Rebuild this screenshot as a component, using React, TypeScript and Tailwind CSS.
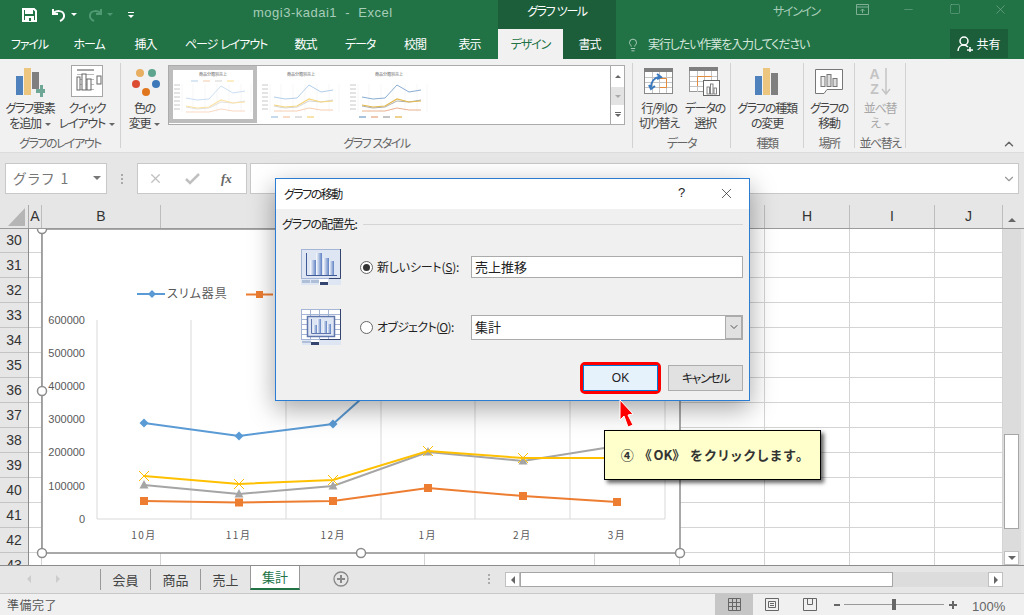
import React from 'react';
import { ChevronDown, ChevronUp, Lightbulb, X, Minus, Square } from 'lucide-react';

const colWidths = [13, 119, 264, 170, 85, 85, 85, 85, 68];
const colNames = ['A', 'B', '', '', '', '', 'H', 'I', 'J'];
const rowNums = [30, 31, 32, 33, 34, 35, 36, 37, 38, 39, 40, 41, 42, 43];

const blue = [[144, 423], [239, 436], [333, 424], [427, 340], [522, 360], [617, 352]];
const orange = [[144, 501], [239, 502.5], [333, 501], [428, 488], [523, 496], [617, 502]];
const gray = [[144, 485], [239, 494], [333, 486], [428, 452], [523, 461], [617, 446]];
const yellow = [[144, 476], [239, 484], [333, 480], [428, 451], [523, 458], [617, 458]];

const pts = (a: number[][]) => a.map((p) => p.join(',')).join(' ');

function Chart() {
  return (
    <svg width="660" height="336" viewBox="30 229 660 336" className="absolute left-[30px] top-0">
      <rect x="42" y="229" width="638" height="324" fill="#fff" stroke="#8c8c8c" strokeWidth="1.5" />
      {[97, 191, 286, 381, 475, 570, 665].map((x) => (
        <line key={x} x1={x} x2={x} y1="320" y2="519" stroke="#d9d9d9" />
      ))}
      <line x1="97" x2="665" y1="519" y2="519" stroke="#d9d9d9" />
      {[['600000', 324], ['500000', 357], ['400000', 390], ['300000', 423], ['200000', 456], ['100000', 490], ['0', 523]].map(([t, y]) => (
        <text key={t} x="85" y={y} textAnchor="end" fontSize="11" fill="#595959" fontFamily="Liberation Sans">{t}</text>
      ))}
      {['10月', '11月', '12月', '1月', '2月', '3月'].map((t, i) => (
        <text key={t} x={144 + i * 94.6} y="539" textAnchor="middle" fontSize="10" letterSpacing="1.5" fill="#595959">{t}</text>
      ))}
      <line x1="137" x2="165" y1="294" y2="294" stroke="#5b9bd5" strokeWidth="2" />
      <polygon points="152,290 156,294 152,298 148,294" fill="#5b9bd5" />
      <text x="167" y="298" fontSize="12" letterSpacing="1" fill="#595959">スリム器具</text>
      <line x1="246" x2="273" y1="294.5" y2="294.5" stroke="#ed7d31" strokeWidth="2" />
      <rect x="256" y="291" width="7" height="7" fill="#ed7d31" />

      <polyline points={pts(blue)} fill="none" stroke="#5b9bd5" strokeWidth="2" />
      {blue.map(([x, y]) => <polygon key={x} points={`${x},${y - 4.5} ${x + 4.5},${y} ${x},${y + 4.5} ${x - 4.5},${y}`} fill="#5b9bd5" />)}
      <polyline points={pts(gray)} fill="none" stroke="#a5a5a5" strokeWidth="2" />
      {gray.map(([x, y]) => <polygon key={x} points={`${x},${y - 5} ${x + 4.5},${y + 3.5} ${x - 4.5},${y + 3.5}`} fill="#a5a5a5" />)}
      <polyline points={pts(yellow)} fill="none" stroke="#ffc000" strokeWidth="2" />
      {yellow.map(([x, y]) => <path key={x} d={`M${x - 5} ${y - 5}L${x + 5} ${y + 5}M${x + 5} ${y - 5}L${x - 5} ${y + 5}`} stroke="#ffc000" strokeWidth="1" />)}
      <polyline points={pts(orange)} fill="none" stroke="#ed7d31" strokeWidth="2" />
      {orange.map(([x, y]) => <rect key={x} x={x - 4} y={y - 4} width="8" height="8" fill="#ed7d31" />)}

      {[[42, 229], [42, 391], [42, 553], [361, 553], [680, 553]].map(([x, y]) => (
        <circle key={`${x}-${y}`} cx={x} cy={y} r="4.5" fill="#fff" stroke="#8c8c8c" strokeWidth="1.5" />
      ))}
    </svg>
  );
}

function Thumb({ selected, colors }: { selected?: boolean; colors: string[] }) {
  const xs = [13, 24, 36, 48, 60, 72];
  const top = selected ? 0 : -1;
  const mk = (ys: number[]) => xs.map((x, i) => [x, ys[i] + top]);
  const chartLeft = 9;
  const legendY = selected ? 11 : 47;
  return (
    <div className={selected ? 'w-[88px] h-[57px] border-[4px] border-[#bdbdbd] flex items-center justify-center' : 'w-[88px] h-[57px] flex items-center justify-center'}>
      <svg width="80" height="49" viewBox="0 0 80 49">
        <rect width="80" height="49" fill="#fff" />
        <text x="40" y="6" fontSize="4" textAnchor="middle" fill="#666">商品分類別売上</text>
        {[chartLeft, 20, 32, 44, 56, 68, 78].map((x) => <line key={x} x1={x} x2={x} y1="14" y2="42" stroke="#efefef" strokeWidth="0.5" />)}
        {[15, 19, 23, 27, 31, 35, 39].map((y) => <line key={y} x1="1" x2="7" y1={y} y2={y} stroke="#c8c8c8" strokeWidth="1" />)}
        {[10, 22, 34, 46].map((x, i) => (
          <line key={x} x1={x + (selected ? 8 : 0)} x2={x + (selected ? 15 : 7)} y1={legendY} y2={legendY} stroke={colors[i]} strokeWidth="1.300" />
        ))}
        <polyline points={pts(mk([28, 30, 29, 16, 23, 21]))} fill="none" stroke={colors[0]} strokeWidth="0.9" />
        <polyline points={pts(mk([37, 39, 38, 32, 33, 31]))} fill="none" stroke={colors[2]} strokeWidth="0.9" />
        <polyline points={pts(mk([36, 38, 37, 30, 33, 32]))} fill="none" stroke={colors[3]} strokeWidth="1.200" />
        <polyline points={pts(mk([42, 42, 42, 39, 41, 41]))} fill="none" stroke={colors[1]} strokeWidth="0.9" />
      </svg>
    </div>
  );
}

function Tri({ light }: { light?: boolean }) {
  return <span className={light ? 'inline-block ml-[4px] mb-[2px] w-0 h-0 border-x-[3px] border-x-transparent border-t-[3px] border-t-[#bbb]' : 'inline-block ml-[4px] mb-[2px] w-0 h-0 border-x-[3px] border-x-transparent border-t-[3px] border-t-[#666]'} />;
}

function BigBtn({ w, icon, lines, faded }: { w: string; icon: React.ReactNode; lines: React.ReactNode[]; faded?: boolean }) {
  return (
    <div className={`${w} flex flex-col items-center`}>
      <div className="h-[37px] flex items-center justify-center">{icon}</div>
      <div className={`text-[12px] leading-[15px] tracking-[-1.200px] text-center whitespace-nowrap ${faded ? 'text-[#a6a6a6]' : 'text-[#444]'}`}>
        {lines.map((l, i) => <div key={i}>{l}</div>)}
      </div>
    </div>
  );
}

function Group({ w, label, children }: { w: string; label: string; children: React.ReactNode }) {
  return (
    <div className={`${w} h-[85px] mt-[4px] border-r border-[#d2d2d2] flex flex-col`}>
      <div className="flex flex-1">{children}</div>
      <div className="text-center text-[12px] leading-[15px] tracking-[-1.500px] mb-[-2px] text-[#666] whitespace-pre">{label}</div>
    </div>
  );
}

function DialogChartIcon({ grid }: { grid?: boolean }) {
  const id = grid ? 'barB' : 'barA';
  return (
    <svg width="41" height="37" viewBox="0 0 41 37">
      <defs>
        <linearGradient id={id} x1="0" x2="1" y1="0" y2="0">
          <stop offset="0" stopColor="#ffffff" />
          <stop offset="1" stopColor="#5f82c4" />
        </linearGradient>
      </defs>
      {grid ? (
        <g>
          <rect x="0.5" y="0.5" width="39" height="30" fill="#fff" stroke="#a5b5d5" />
          {[9, 18, 27].map((x) => <line key={x} x1={x + 0.5} x2={x + 0.5} y1="0" y2="31" stroke="#a5b5d5" />)}
          {[5, 10, 15, 20, 25].map((y) => <line key={y} x1="0" x2="40" y1={y + 0.5} y2={y + 0.5} stroke="#a5b5d5" />)}
          <path d="M39.500 0V30.500H19" fill="none" stroke="#34466f" />
          <rect x="6.500" y="7.500" width="27" height="20" fill="#dfe6f3" stroke="#5f76ad" strokeWidth="1.500" />
          <path d="M10.500 10V24.500H30" fill="none" stroke="#5f76ad" />
          <rect x="12" y="16" width="4" height="8" fill={`url(#${id})`} />
          <rect x="16" y="10" width="4" height="14" fill={`url(#${id})`} />
          <rect x="22" y="12" width="4" height="12" fill={`url(#${id})`} />
          <rect x="26" y="15" width="4" height="9" fill={`url(#${id})`} />
          <rect x="1" y="31" width="39" height="5" fill="#dfe6f3" />
          <rect x="1" y="32" width="9" height="2" fill="#b0bfd8" />
          <rect x="10" y="31" width="8" height="2" fill="#fff" />
          <rect x="10" y="33" width="8" height="3" fill="#34466f" />
        </g>
      ) : (
        <g>
          <rect x="0" y="29" width="40" height="7" fill="#dfe6f3" />
          <rect x="1" y="31" width="8" height="3" fill="#b0bfd8" />
          <rect x="10" y="31" width="8" height="3" fill="#b0bfd8" />
          <rect x="0.500" y="0.500" width="39" height="29" fill="#dfe6f3" stroke="#a5b5d5" />
          <path d="M39.500 0V29.500H28" fill="none" stroke="#34466f" />
          <path d="M5.500 4V26.500H36" fill="none" stroke="#3f5a96" />
          <rect x="9" y="11" width="6" height="15" fill={`url(#${id})`} />
          <rect x="15" y="4" width="6" height="22" fill={`url(#${id})`} />
          <rect x="22" y="9" width="6" height="17" fill={`url(#${id})`} />
          <rect x="28" y="12" width="5" height="14" fill={`url(#${id})`} />
          <rect x="18" y="30" width="9" height="6" fill="#fff" />
          <rect x="19" y="33" width="8" height="3" fill="#34466f" />
        </g>
      )}
    </svg>
  );
}

export default function App() {
  return (
    <div className="relative w-[1024px] h-[615px] overflow-hidden bg-[#e6e6e6] font-['Noto_Sans_CJK_JP',sans-serif] [font-feature-settings:'palt'] select-none">
      {/* タイトルバー */}
      <div className="h-[29px] bg-[#217346] flex items-center relative">
        <svg width="15" height="14" viewBox="0 0 15 14" className="ml-[22px]">
          <path d="M1 1H12L14 3V13H1Z" fill="none" stroke="#fff" strokeWidth="2" />
          <rect x="3" y="1" width="8" height="5" fill="#fff" />
          <rect x="3" y="8" width="9" height="5" fill="#fff" />
          <rect x="7" y="10" width="2" height="3" fill="#217346" />
        </svg>
        <svg width="18" height="16" viewBox="0 0 18 16" className="ml-[13px]">
          <path d="M3 2V7H8M3 7C6 3 13 3 14 8C14.500 11 12 13 10 14" fill="none" stroke="#fff" strokeWidth="2" />
        </svg>
        <span className="ml-[3px] w-0 h-0 border-x-[3px] border-x-transparent border-t-[3px] border-t-white" />
        <svg width="16" height="16" viewBox="0 0 16 16" className="ml-[10px]">
          <path d="M14 2V7H9M14 7C11 3 4 3 3 8C2.500 11 5 13 7 14" fill="none" stroke="#4f9a72" strokeWidth="2" />
        </svg>
        <span className="ml-[4px] w-0 h-0 border-x-[3px] border-x-transparent border-t-[3px] border-t-[#4f9a72]" />
        <div className="ml-[15px] flex flex-col items-center gap-[2px]">
          <span className="w-[6px] h-[1px] bg-white" />
          <span className="w-0 h-0 border-x-[3px] border-x-transparent border-t-[3px] border-t-white" />
        </div>
        <div className="absolute left-[253px] top-[3px] text-[13px] tracking-[0.500px] text-[#a7cdb8] whitespace-pre font-['Liberation_Sans',sans-serif]">mogi3-kadai1  -  Excel</div>
        <div className="absolute left-[498px] top-0 w-[118px] h-[29px] bg-[#1c5e3a] text-white text-[12px] tracking-[-1.400px] flex justify-center pt-[2px] whitespace-pre">グラフ  ツール</div>
        <div className="absolute left-[773px] top-[2px] text-[12px] tracking-[-1.400px] text-[#a7cdb8]">サインイン</div>
        <svg width="14" height="12" viewBox="0 0 14 12" className="absolute left-[856px] top-[4px]">
          <path d="M.5 .5H12.500V10.500H.5ZM.5 3H12.500M6.500 9V5M4.500 7L6.500 5L8.500 7" fill="none" stroke="#7fb096" />
        </svg>
        <Minus size={13} strokeWidth={1} className="absolute left-[902px] top-[3px] text-[#7fb096]" />
        <Square size={12} strokeWidth={1} className="absolute left-[949px] top-[3px] text-[#7fb096]" />
        <X size={15} strokeWidth={1} className="absolute left-[993px] top-[2px] text-[#7fb096]" />
      </div>

      {/* タブ行 */}
      <div className="h-[30px] bg-[#217346] flex items-stretch text-[12px] tracking-[-1.100px] text-white whitespace-pre">
        <div className="w-[59px] flex items-center justify-center">ファイル</div>
        <div className="w-[60px] flex items-center justify-center">ホーム</div>
        <div className="w-[53px] flex items-center justify-center">挿入</div>
        <div className="w-[108px] flex items-center justify-center">ページ  レイアウト</div>
        <div className="w-[51px] flex items-center justify-center">数式</div>
        <div className="w-[58px] flex items-center justify-center">データ</div>
        <div className="w-[52px] flex items-center justify-center">校閲</div>
        <div className="w-[57px] flex items-center justify-center">表示</div>
        <div className="w-[65px] bg-[#f1f1f1] text-[#217346] flex items-center justify-center">デザイン</div>
        <div className="w-[53px] bg-[#1c5e3a] flex items-center justify-center">書式</div>
        <Lightbulb size={14} strokeWidth={1.300} className="ml-[10px] mt-[9px] text-[#d5e6dc]" />
        <div className="ml-[8px] flex items-center text-[#d5e6dc] w-[302px]">実行したい作業を入力してください</div>
        <div className="w-[58px] h-[29px] bg-[#1c5e3a] flex items-center justify-center gap-[3px] tracking-normal">
          <svg width="16" height="16" viewBox="0 0 16 16">
            <circle cx="7" cy="5" r="4" fill="none" stroke="#fff" strokeWidth="1.500" />
            <path d="M1 15C1 11 4 9 7 9C9 9 10 10 11 11M10 14H16M13 11V16" fill="none" stroke="#fff" strokeWidth="1.500" />
          </svg>
          <span>共有</span>
        </div>
      </div>

      {/* リボン */}
      <div className="h-[94px] bg-[#f1f1f1] flex relative border-b border-[#dcdcdc]">
        <Group w="w-[121px]" label="グラフのレイアウト">
          <BigBtn
            w="w-[60px]"
            lines={['グラフ要素', <>を追加<Tri /></>]}
            icon={
              <svg width="30" height="30" viewBox="0 0 30 30">
                <rect x="1" y="9" width="7" height="19" fill="#4f81bd" />
                <rect x="9" y="1" width="7" height="27" fill="#ecc67f" />
                <rect x="17" y="5" width="7" height="17" fill="#7f7f7f" />
                <path d="M21 22H25V18H28V22H31V26H28V30H25V26H21Z" fill="#6fa797" />
              </svg>
            }
          />
          <BigBtn
            w="w-[54px]"
            lines={['クイック', <>レイアウト<Tri /></>]}
            icon={
              <svg width="33" height="33" viewBox="0 0 33 33">
                <rect x=".5" y=".5" width="31" height="31" fill="#fff" stroke="#a6a6a6" />
                <rect x="6" y="4" width="17" height="2" fill="#a6a6a6" />
                <path d="M6 9.500H23M6 14.500H23M6 19.500H23M6 24.500H23" stroke="#bbb" />
                <rect x="6" y="12" width="3" height="13" fill="#fff" stroke="#666" />
                <rect x="11" y="9" width="4" height="16" fill="#fff" stroke="#666" />
                <rect x="16" y="14" width="4" height="11" fill="#fff" stroke="#666" />
                <rect x="26" y="11" width="4" height="8" fill="#fff" stroke="#666" />
              </svg>
            }
          />
        </Group>
        <Group w="w-[512px]" label="グラフ  スタイル">
          <BigBtn
            w="w-[47px]"
            lines={['色の', <>変更<Tri /></>]}
            icon={
              <svg width="30" height="32" viewBox="0 0 30 32">
                <circle cx="10" cy="7" r="4" fill="#e8ae62" />
                <circle cx="22" cy="7" r="4" fill="#5fa48e" />
                <circle cx="6" cy="18" r="4" fill="#db4c33" />
                <circle cx="26" cy="18" r="4" fill="#3d78b8" />
                <circle cx="16" cy="26" r="4" fill="#e0761e" />
              </svg>
            }
          />
          <div className="h-[60px] mt-[2px] w-[457px] flex bg-white border border-[#ababab]">
            <Thumb selected colors={['#c5daf0', '#f8d5bd', '#dddddd', '#fbe3a6']} />
            <Thumb colors={['#a9c7e6', '#f6c9a9', '#cfcfcf', '#f5d67e']} />
            <Thumb colors={['#7aa3cc', '#e8a882', '#a5a5a5', '#e3b94e']} />
            <div className="flex-1" />
            <div className="w-[14px] flex flex-col border-l border-[#ababab] bg-white">
              <div className="h-[21px] flex items-center justify-center"><span className="w-0 h-0 border-x-[3px] border-x-transparent border-b-[3px] border-b-[#666]" /></div>
              <div className="h-[18px] bg-[#e3e3e3] flex items-center justify-center"><span className="w-0 h-0 border-x-[3px] border-x-transparent border-t-[3px] border-t-[#aaa]" /></div>
              <div className="flex-1 flex flex-col items-center justify-center gap-[1px]">
                <span className="w-[6px] h-[1px] bg-[#666]" />
                <span className="w-0 h-0 border-x-[3px] border-x-transparent border-t-[3px] border-t-[#666]" />
              </div>
            </div>
          </div>
        </Group>
        <Group w="w-[98px]" label="データ">
          <BigBtn
            w="w-[52px]"
            lines={['行/列の', '切り替え']}
            icon={
              <svg width="30" height="27" viewBox="0 0 30 27">
                <rect x=".5" y=".5" width="28" height="25" fill="#fff" stroke="#888" />
                <rect x="0" y="0" width="29" height="4" fill="#7f7f7f" />
                <path d="M1 9.500H28M1 14.500H28M1 19.500H28M8.500 4V25M15.500 4V25M22.500 4V25" stroke="#c4c4c4" />
                <path d="M15.500 10.500H22.500V19.500H15.500" fill="none" stroke="#e48a3c" />
                <path d="M7 19C7 14 10 10 15 9M13 6L17 9L13 11M5 17L7 21L11 18" fill="none" stroke="#3a79bd" strokeWidth="2" />
              </svg>
            }
          />
          <BigBtn
            w="w-[40px]"
            lines={['データの', '選択']}
            icon={
              <svg width="32" height="30" viewBox="0 0 32 30">
                <rect x=".5" y=".5" width="28" height="24" fill="#fff" stroke="#999" />
                <rect x="0" y="0" width="29" height="4" fill="#7f7f7f" />
                <path d="M1 9.500H28M1 14.500H28M1 19.500H28M8.500 4V25M15.500 4V25M22.500 4V25" stroke="#c4c4c4" />
                <path d="M8.500 19V9.500H22.500" fill="none" stroke="#e48a3c" />
                <rect x="14.500" y="13.500" width="16" height="15" fill="#fff" stroke="#666" />
                <rect x="18" y="20" width="2.500" height="7" fill="#fff" stroke="#666" strokeWidth=".8" />
                <rect x="21.500" y="17" width="2.500" height="10" fill="#fff" stroke="#666" strokeWidth=".8" />
                <rect x="25" y="21" width="2.500" height="6" fill="#fff" stroke="#666" strokeWidth=".8" />
              </svg>
            }
          />
        </Group>
        <Group w="w-[73px]" label="種類">
          <BigBtn
            w="w-full"
            lines={['グラフの種類', 'の変更']}
            icon={
              <svg width="24" height="27" viewBox="0 0 24 27">
                <rect x="0" y="8" width="7" height="19" fill="#4f81bd" />
                <rect x="8" y="0" width="7" height="27" fill="#ecc67f" />
                <rect x="16" y="5" width="7" height="22" fill="#7f7f7f" />
              </svg>
            }
          />
        </Group>
        <Group w="w-[51px]" label="場所">
          <BigBtn
            w="w-full"
            lines={['グラフの', '移動']}
            icon={
              <svg width="29" height="26" viewBox="0 0 29 26">
                <path d="M.5 .5H27.500V20.500H12L9 24.500H.5Z" fill="#fff" stroke="#777" />
                <rect x="6" y="7.500" width="4" height="10" fill="#eee" stroke="#777" />
                <rect x="12" y="5.500" width="4" height="12" fill="#ddd" stroke="#777" />
                <rect x="18" y="9.500" width="4" height="8" fill="#ddd" stroke="#777" />
              </svg>
            }
          />
        </Group>
        <Group w="w-[51px]" label="並べ替え">
          <BigBtn
            w="w-full"
            faded
            lines={['並べ替', <>え<Tri light /></>]}
            icon={
              <div className="flex items-center gap-[1px] text-[#c4c4c4] font-['Liberation_Sans',sans-serif] font-bold">
                <div className="text-[14px] leading-[15px] text-center">A<br />Z</div>
                <svg width="10" height="28" viewBox="0 0 10 28"><path d="M5 0V26M1 21L5 26L9 21" fill="none" stroke="#c4c4c4" strokeWidth="1.500" /></svg>
              </div>
            }
          />
        </Group>
        <ChevronUp size={14} strokeWidth={2.500} className="absolute left-[1002px] top-[78px] text-[#666]" />
      </div>

      {/* 数式バー */}
      <div className="h-[52px] pt-[10px] flex items-start">
        <div className="ml-[5px] w-[102px] h-[31px] bg-white border border-[#c8c8c8] flex items-center pl-[7px] text-[14px] tracking-[2px] text-[#777] relative">
          グラフ 1
          <span className="absolute right-[5px] top-[12px] w-0 h-0 border-x-[4px] border-x-transparent border-t-[4px] border-t-[#777]" />
        </div>
        <div className="w-[30px] h-[31px] flex flex-col items-center justify-center gap-[2px]">
          <span className="w-[2px] h-[2px] bg-[#aaa]" />
          <span className="w-[2px] h-[2px] bg-[#aaa]" />
          <span className="w-[2px] h-[2px] bg-[#aaa]" />
        </div>
        <div className="w-[110px] h-[31px] bg-white border border-[#c8c8c8] flex items-center">
          <X size={15} strokeWidth={2} className="ml-[10px] text-[#c0c0c0]" />
          <svg width="15" height="13" viewBox="0 0 15 13" className="ml-[22px]"><path d="M1 7L5 11L14 2" fill="none" stroke="#c0c0c0" strokeWidth="2.500" /></svg>
          <span className="ml-[21px] font-['Liberation_Serif',serif] italic font-bold text-[13px] text-[#666]">fx</span>
        </div>
        <div className="ml-[3px] w-[769px] h-[31px] bg-white border border-[#c8c8c8] flex items-center justify-end pr-[2px]">
          <ChevronDown size={14} className="text-[#999]" />
        </div>
      </div>

      {/* 列見出し */}
      <div className="h-[24px] flex border-b border-[#9a9a9a] text-[14px] text-[#333] font-['Liberation_Sans',sans-serif]">
        <div className="w-[29px] border-r border-[#aaa] relative">
          <span className="absolute left-[8px] top-[3px] w-0 h-0 border-l-[17px] border-l-transparent border-b-[18px] border-b-[#b5b5b5]" />
        </div>
        {colNames.map((c, i) => (
          <div key={i} style={{ width: colWidths[i] }} className="border-r border-[#bdbdbd] flex items-center justify-center overflow-hidden">{c}</div>
        ))}
        <div className="w-[18px] flex items-end justify-center pb-[6px]">
          <span className="w-0 h-0 border-x-[4px] border-x-transparent border-b-[4px] border-b-[#666]" />
        </div>
      </div>

      {/* シート本体 */}
      <div className="h-[336px] flex relative">
        <div className="w-[29px] shrink-0 border-r border-[#8c8c8c] overflow-hidden">
          {rowNums.map((r, i) => (
            <div key={r} className={`${i === 0 ? 'h-[24px]' : 'h-[25px]'} border-b border-[#c4c4c4] flex items-center justify-center text-[14px] text-[#333] font-['Liberation_Sans',sans-serif]`}>{r}</div>
          ))}
        </div>
        <div className="w-[974px] bg-white overflow-hidden">
          {rowNums.map((r, i) => (
            <div key={r} className={`${i === 0 ? 'h-[24px]' : 'h-[25px]'} flex border-b border-[#d4d4d4]`}>
              {colWidths.map((w, j) => (
                <div key={j} style={{ width: w }} className="border-r border-[#d4d4d4] shrink-0" />
              ))}
            </div>
          ))}
        </div>
        <div className="w-[18px] h-[336px] bg-[#dcdcdc] relative">
          <div className="absolute left-[1px] top-[205px] w-[15px] h-[95px] bg-white border border-[#a6a6a6]" />
          <div className="absolute left-[1px] bottom-0 w-[15px] h-[14px] bg-white border border-[#c0c0c0] flex items-center justify-center">
            <span className="w-0 h-0 border-x-[4px] border-x-transparent border-t-[4px] border-t-[#666]" />
          </div>
        </div>
        <Chart />
      </div>

      {/* シートタブ */}
      <div className="h-[28px] border-t border-[#8c8c8c] flex items-start relative text-[13px] text-[#444]">
        <span className="absolute left-[27px] top-[9px] w-0 h-0 border-y-[4px] border-y-transparent border-r-[4px] border-r-[#ccc]" />
        <span className="absolute left-[56px] top-[9px] w-0 h-0 border-y-[4px] border-y-transparent border-l-[4px] border-l-[#ccc]" />
        <div className="ml-[100px] flex h-[24px] items-stretch">
          {['会員', '商品', '売上'].map((t) => (
            <div key={t} className="w-[50px] border-l border-[#999] mt-[3px] flex items-center justify-center">{t}</div>
          ))}
          <div className="w-[50px] h-[24px] bg-white border-x border-[#999] border-b-2 border-b-[#217346] text-[#217346] flex items-center justify-center">集計</div>
        </div>
        <svg width="16" height="16" viewBox="0 0 16 16" className="ml-[33px] mt-[5px]">
          <circle cx="8" cy="8" r="7" fill="none" stroke="#888" strokeWidth="1.300" />
          <path d="M8 4V12M4 8H12" stroke="#888" strokeWidth="2" />
        </svg>
        <div className="absolute left-[488px] top-[8px] flex flex-col gap-[2px]">
          <span className="w-[2px] h-[2px] bg-[#aaa]" />
          <span className="w-[2px] h-[2px] bg-[#aaa]" />
          <span className="w-[2px] h-[2px] bg-[#aaa]" />
        </div>
        <div className="absolute left-[505px] top-[6px] w-[498px] h-[15px] bg-[#dcdcdc] flex">
          <div className="w-[15px] bg-white border border-[#c0c0c0] flex items-center justify-center">
            <span className="w-0 h-0 border-y-[4px] border-y-transparent border-r-[4px] border-r-[#666]" />
          </div>
          <div className="w-[373px] bg-white border border-[#a6a6a6]" />
          <div className="flex-1" />
          <div className="w-[15px] bg-white border border-[#c0c0c0] flex items-center justify-center">
            <span className="w-0 h-0 border-y-[4px] border-y-transparent border-l-[4px] border-l-[#666]" />
          </div>
        </div>
      </div>

      {/* ステータスバー */}
      <div className="h-[22px] bg-[#f0f0f0] border-t border-[#c8c8c8] flex items-center relative text-[12px] text-[#555]">
        <span className="ml-[7px] tracking-[0.5px]">準備完了</span>
        <div className="absolute left-[715px] top-0 w-[38px] h-[21px] bg-[#c6c6c6] flex items-center justify-center">
          <svg width="13" height="13" viewBox="0 0 13 13"><path d="M.5 .5H12.500V12.500H.5ZM4.500 0V13M8.500 0V13M0 4.500H13M0 8.500H13" fill="none" stroke="#666" /></svg>
        </div>
        <svg width="14" height="13" viewBox="0 0 14 13" className="absolute left-[765px] top-[4px]"><path d="M.5 .5H13.500V12.500H.5ZM3.500 3.500H10.500V9.500H3.500ZM5 5.500H9M5 7.500H9" fill="none" stroke="#666" /></svg>
        <svg width="14" height="13" viewBox="0 0 14 13" className="absolute left-[803px] top-[4px]"><path d="M.5 .5H13.500V12.500H.5ZM4.500 .5V6.500H9.500V.5" fill="none" stroke="#666" /></svg>
        <span className="absolute left-[834px] top-[10px] w-[6px] h-[2px] bg-[#666]" />
        <span className="absolute left-[844px] top-[10px] w-[100px] h-[1px] bg-[#999]" />
        <span className="absolute left-[892px] top-[5px] w-[4px] h-[11px] bg-[#666]" />
        <span className="absolute left-[949px] top-[10px] w-[8px] h-[2px] bg-[#666]" />
        <span className="absolute left-[952px] top-[7px] w-[2px] h-[8px] bg-[#666]" />
        <span className="absolute left-[972px] top-[3px] text-[#666] text-[13px] font-['Liberation_Sans',sans-serif]">100%</span>
      </div>

      {/* ダイアログ */}
      <div className="absolute left-[275px] top-[178px] w-[475px] h-[223px] bg-[#f0f0f0] border border-[#2b7cd3] shadow-[0_8px_24px_rgba(0,0,0,0.35)] text-[12px] text-[#222]">
        <div className="h-[30px] bg-white flex items-center pl-[8px] relative">
          <span className="tracking-[-1.500px]">グラフの移動</span>
          <span className="absolute left-[402px] top-[4px] text-[13px] font-['Liberation_Sans',sans-serif]">?</span>
          <X size={17} strokeWidth={1} className="absolute left-[442px] top-[6px]" />
        </div>
        <div className="flex items-center mt-[6px] pl-[6px] pr-[6px]">
          <span className="whitespace-nowrap tracking-[-0.900px]">グラフの配置先:</span>
          <span className="ml-[6px] flex-1 h-[1px] bg-[#d5d5d5]" />
        </div>
        <div className="flex items-center mt-[16px] pl-[25px] h-[36px]">
          <DialogChartIcon />
          <span className="ml-[18px] w-[13px] h-[13px] rounded-full border border-[#666] bg-white flex items-center justify-center">
            <span className="w-[7px] h-[7px] rounded-full bg-[#333]" />
          </span>
          <span className="ml-[4px] w-[94px] whitespace-nowrap tracking-[-0.200px]">新しいシート(<u>S</u>):</span>
          <div className="w-[272px] h-[22px] bg-white border border-[#ababab] flex items-center pl-[3px] text-[13px]">売上推移</div>
        </div>
        <div className="flex items-center mt-[24px] pl-[25px] h-[36px]">
          <DialogChartIcon grid />
          <span className="ml-[18px] w-[13px] h-[13px] rounded-full border border-[#666] bg-white" />
          <span className="ml-[4px] w-[94px] whitespace-nowrap tracking-[-0.700px]">オブジェクト(<u>O</u>):</span>
          <div className="w-[272px] h-[25px] bg-white border border-[#ababab] flex items-center pl-[3px] text-[13px]">
            <span className="flex-1">集計</span>
            <span className="w-[17px] h-[23px] bg-[#e1e1e1] border border-[#ababab] flex items-center justify-center">
              <ChevronDown size={12} className="text-[#555]" />
            </span>
          </div>
        </div>
        <div className="absolute left-[304px] top-[183px] flex items-center">
          <div className="w-[81px] h-[32px] border-[3px] border-[#ff0000] rounded-[5px] p-0">
            <div className="w-full h-full bg-[#e5f1fb] border border-[#0078d7] flex items-center justify-center text-[12px] font-['Liberation_Sans',sans-serif]">OK</div>
          </div>
          <div className="ml-[7px] w-[75px] h-[26px] bg-[#e1e1e1] border border-[#adadad] flex items-center justify-center tracking-[-1.400px]">キャンセル</div>
        </div>
      </div>

      {/* 矢印 */}
      <svg width="22" height="30" viewBox="0 0 22 30" className="absolute left-[617px] top-[399px]">
        <path d="M3 1L16 15L11 16L16 26L11 28L7 17L3 21Z" fill="#ff0000" stroke="#fff" strokeWidth="1" />
      </svg>

      {/* 吹き出し */}
      <div className="absolute left-[604px] top-[430px] w-[217px] h-[50px] bg-[#ffffcc] border border-black shadow-[3px_3px_4px_rgba(0,0,0,0.6)] flex items-center justify-center text-[13px] font-bold tracking-[1.800px] text-[#333] whitespace-pre">
        <span>④  《<span className="tracking-normal">OK</span>》  をクリックします。</span>
      </div>
    </div>
  );
}
